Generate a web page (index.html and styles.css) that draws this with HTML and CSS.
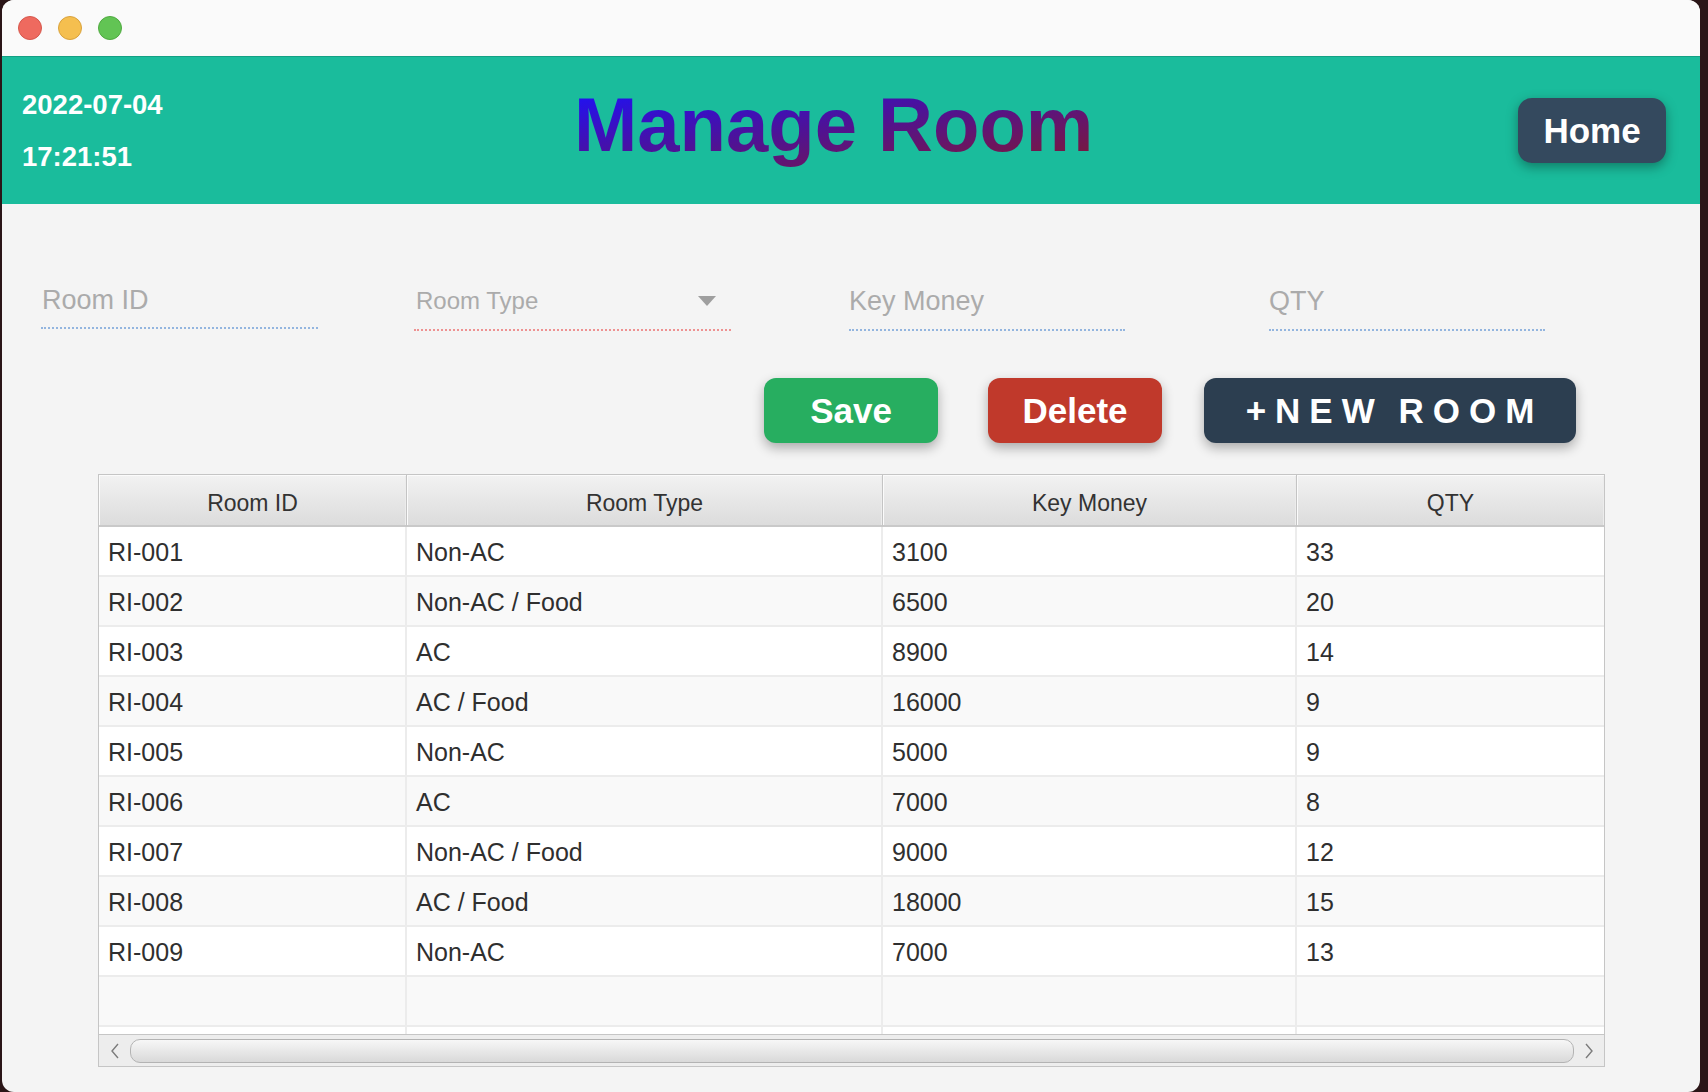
FILE: index.html
```html
<!DOCTYPE html>
<html lang="en">
<head>
<meta charset="utf-8">
<title>Manage Room</title>
<link rel="stylesheet" href="styles.css">
</head>
<body>
<div class="window">
  <div class="titlebar">
    <span class="light red"></span>
    <span class="light yellow"></span>
    <span class="light green"></span>
  </div>
  <header class="appbar">
    <div class="clock">
      <div>2022-07-04</div>
      <div>17:21:51</div>
    </div>
    <h1 class="title">Manage Room</h1>
    <button class="home">Home</button>
  </header>
  <main class="content">
    <div class="form-row">
      <div class="field f-id">Room ID</div>
      <div class="field combo f-type"><span>Room Type</span><svg class="caret" width="18" height="10" viewBox="0 0 18 10"><polygon points="0,0 18,0 9,10" fill="#9f9f9f"/></svg></div>
      <div class="field f-money">Key Money</div>
      <div class="field f-qty">QTY</div>
    </div>
    <div class="actions">
      <button class="btn save">Save</button>
      <button class="btn delete">Delete</button>
      <button class="btn new">+NEW ROOM</button>
    </div>
    <div class="table">
      <div class="rows">
        <div class="row head">
          <div class="hcell">Room ID</div>
          <div class="hcell">Room Type</div>
          <div class="hcell">Key Money</div>
          <div class="hcell">QTY</div>
        </div>
        <div class="body">
          <div class="row"><div class="cell">RI-001</div><div class="cell">Non-AC</div><div class="cell">3100</div><div class="cell">33</div></div>
          <div class="row"><div class="cell">RI-002</div><div class="cell">Non-AC / Food</div><div class="cell">6500</div><div class="cell">20</div></div>
          <div class="row"><div class="cell">RI-003</div><div class="cell">AC</div><div class="cell">8900</div><div class="cell">14</div></div>
          <div class="row"><div class="cell">RI-004</div><div class="cell">AC / Food</div><div class="cell">16000</div><div class="cell">9</div></div>
          <div class="row"><div class="cell">RI-005</div><div class="cell">Non-AC</div><div class="cell">5000</div><div class="cell">9</div></div>
          <div class="row"><div class="cell">RI-006</div><div class="cell">AC</div><div class="cell">7000</div><div class="cell">8</div></div>
          <div class="row"><div class="cell">RI-007</div><div class="cell">Non-AC / Food</div><div class="cell">9000</div><div class="cell">12</div></div>
          <div class="row"><div class="cell">RI-008</div><div class="cell">AC / Food</div><div class="cell">18000</div><div class="cell">15</div></div>
          <div class="row"><div class="cell">RI-009</div><div class="cell">Non-AC</div><div class="cell">7000</div><div class="cell">13</div></div>
          <div class="row"><div class="cell"></div><div class="cell"></div><div class="cell"></div><div class="cell"></div></div>
          <div class="row"><div class="cell"></div><div class="cell"></div><div class="cell"></div><div class="cell"></div></div>
        </div>
      </div>
      <div class="hscroll">
        <div class="arrow left"><svg width="10" height="16" viewBox="0 0 10 16"><polyline points="8,1 2,8 8,15" fill="none" stroke="#7c7c7c" stroke-width="1.4"/></svg></div>
        <div class="thumb"></div>
        <div class="arrow right"><svg width="10" height="16" viewBox="0 0 10 16"><polyline points="2,1 8,8 2,15" fill="none" stroke="#7c7c7c" stroke-width="1.4"/></svg></div>
      </div>
    </div>
  </main>
</div>
</body>
</html>
```
FILE: styles.css
```css
html, body {
  margin: 0;
  padding: 0;
}
body {
  background: #2a1517;
  width: 1708px;
  height: 1092px;
  overflow: hidden;
  font-family: "Liberation Sans", Arial, sans-serif;
}
.window {
  width: 1698px;
  height: 1092px;
  margin-left: 2px;
  border-radius: 12px;
  overflow: hidden;
  background: #f4f4f4;
  display: flex;
  flex-direction: column;
}

/* title bar */
.titlebar {
  height: 56px;
  flex: none;
  box-sizing: border-box;
  padding: 16px 0 0 16px;
  background: #fafafa;
  display: flex;
  gap: 16px;
}
.light {
  width: 24px;
  height: 24px;
  border-radius: 50%;
  box-sizing: border-box;
}
.red { background: #ee6a5f; border: 1px solid #d6574c; }
.yellow { background: #f5bf4f; border: 1px solid #d9a23c; }
.green { background: #62c454; border: 1px solid #4faa40; }

/* header */
.appbar {
  height: 148px;
  flex: none;
  box-sizing: border-box;
  border-top: 1px solid #13a084;
  background: #1abc9c;
  display: flex;
  align-items: center;
  padding-left: 20px;
}
.clock {
  width: 552px;
  flex: none;
  color: #fff;
  font-weight: 700;
  font-size: 27.5px;
  line-height: 52px;
}
.title {
  margin: 0 0 12px;
  font-size: 76px;
  font-weight: 700;
  line-height: normal;
  background: linear-gradient(to bottom right, #12a060 0%, #1d3fdc 6%, #2212ee 10%, #3a10c2 30%, #4e1296 50%, #6a1662 75%, #7e1a30 100%);
  -webkit-background-clip: text;
  background-clip: text;
  color: transparent;
}
.home {
  margin-left: auto;
  margin-right: 34px;
  width: 148px;
  height: 65px;
  border: 0;
  padding: 0;
  border-radius: 14px;
  background: #34495e;
  color: #fff;
  font-family: "Liberation Sans", Arial, sans-serif;
  font-weight: 700;
  font-size: 35px;
  box-shadow: 0 4px 12px rgba(0, 0, 0, 0.35);
}

/* form */
.content {
  flex: 1;
}
.form-row {
  display: flex;
  align-items: flex-start;
  padding: 80px 0 0 39px;
}
.field {
  box-sizing: border-box;
  font-size: 27px;
  line-height: 32px;
  color: #ababab;
  padding-bottom: 11px;
  border-bottom: 2px dotted #93b5df;
  white-space: nowrap;
}
.f-id { width: 277px; padding-left: 1px; }
.f-type {
  width: 317px;
  margin-left: 96px;
  font-size: 24px;
  padding-top: 1px;
  padding-left: 2px;
  padding-bottom: 12px;
  border-bottom-color: #ee9292;
}
.combo {
  display: flex;
  justify-content: space-between;
  align-items: flex-start;
}
.caret {
  margin: 11px 15px 0 0;
}
.f-money {
  width: 276px;
  margin-left: 118px;
  padding-top: 1px;
  padding-bottom: 12px;
}
.f-qty {
  width: 276px;
  margin-left: 144px;
  padding-top: 1px;
  padding-bottom: 12px;
}

/* action buttons */
.actions {
  display: flex;
  justify-content: flex-end;
  padding-right: 124px;
  margin-top: 47px;
}
.btn {
  height: 65px;
  border: 0;
  padding: 0;
  border-radius: 12px;
  color: #fff;
  font-family: "Liberation Sans", Arial, sans-serif;
  font-weight: 700;
  font-size: 35px;
  box-shadow: 0 5px 12px rgba(0, 0, 0, 0.3);
}
.save { width: 174px; background: #27ae60; }
.delete { width: 174px; margin-left: 50px; background: #c0392b; }
.new {
  width: 372px;
  margin-left: 42px;
  background: #2c3e50;
  letter-spacing: 9px;
  word-spacing: -4px;
  padding-left: 9px;
}

/* table */
.table {
  margin: 31px 0 0 96px;
  width: 1507px;
  height: 593px;
  box-sizing: border-box;
  border: 1px solid #c5c5c5;
  display: flex;
  flex-direction: column;
  background: #fff;
}
.rows {
  height: 559px;
  flex: none;
  overflow: hidden;
}
.row {
  display: grid;
  grid-template-columns: 308px 476px 414px 307px;
}
.hcell {
  height: 52px;
  box-sizing: border-box;
  border-bottom: 2px solid #c9c9c9;
  border-right: 1px solid #c4c4c4;
  background: linear-gradient(#f2f2f2, #dcdcdc);
  box-shadow: inset 1px 1px 0 #fbfbfb, inset -1px 0 0 #ececec;
  text-align: center;
  font-size: 23px;
  padding-top: 7px;
  line-height: 43px;
  color: #333;
}
.hcell:last-child { border-right: 0; }
.cell {
  height: 50px;
  box-sizing: border-box;
  border-bottom: 2px solid #ececec;
  border-right: 2px solid #ececec;
  padding: 4px 0 0 9px;
  line-height: 42px;
  font-size: 25px;
  color: #2f2f2f;
  white-space: nowrap;
  overflow: hidden;
  background: #fff;
}
.cell:last-child { border-right: 0; }
.body .row:nth-child(even) .cell { background: #f9f9f9; }

/* horizontal scrollbar */
.hscroll {
  height: 32px;
  flex: none;
  box-sizing: border-box;
  border-top: 1px solid #c6c6c6;
  background: #ededed;
  display: flex;
  align-items: center;
}
.arrow {
  display: flex;
  justify-content: center;
  align-items: center;
}
.arrow.left { width: 31px; }
.arrow.right { width: 30px; }
.thumb {
  flex: 1;
  height: 24px;
  box-sizing: border-box;
  border: 1.5px solid #b3b3b3;
  border-radius: 10px;
  background: linear-gradient(#f7f7f7, #d9d9d9);
}
```
